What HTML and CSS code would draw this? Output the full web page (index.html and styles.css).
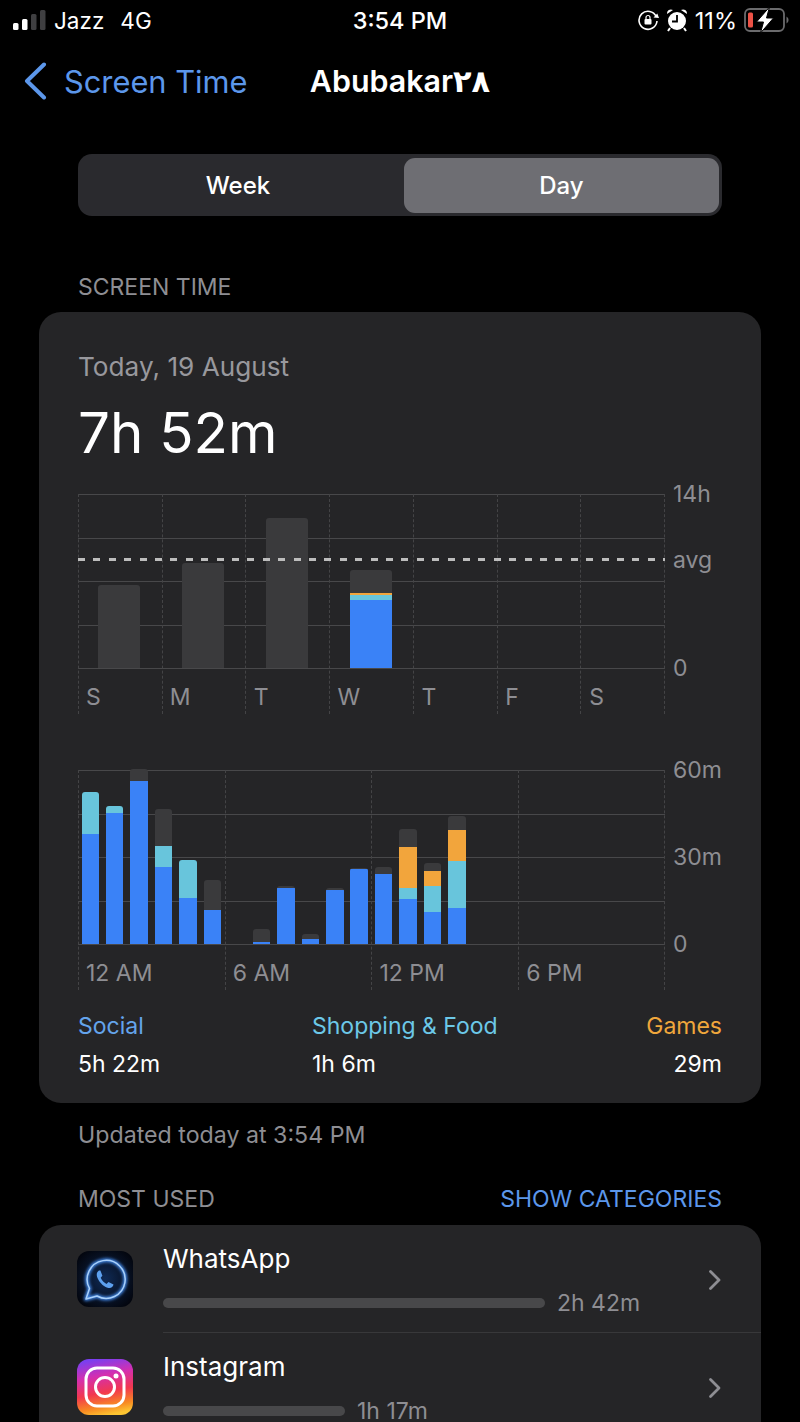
FILE: index.html
```html
<!doctype html>
<html>

<head>
  <title>Screen Time</title>
  <link rel="stylesheet" href="styles.css">
</head>

<body>
  <div class="status-bar">
    <div class="status-left">
      <svg class="signal" width="33" height="20" viewBox="0 0 33 20">
        <rect x="0" y="13" width="5.500" height="7" rx="1.500" fill="#fff"/>
        <rect x="9" y="9" width="5.500" height="11" rx="1.500" fill="#fff"/>
        <rect x="18" y="4" width="5.500" height="16" rx="1.500" fill="#3f3f41"/>
        <rect x="27" y="0" width="5.500" height="20" rx="1.500" fill="#3f3f41"/>
      </svg>
      <span>Jazz</span>
      <span class="network">4G</span>
    </div>
    <div class="status-time">3:54 PM</div>
    <div class="status-right">
      <svg width="21" height="22" viewBox="0 0 21 22">
        <path d="M18.200 7.500A9 9 0 1 0 19 12" fill="none" stroke="#fff" stroke-width="1.600"/>
        <path d="M21 9l-5.500-.5 3.800-4z" fill="#fff"/>
        <rect x="6.500" y="10" width="7" height="5.500" rx="1" fill="#fff"/>
        <path d="M8 10.500V8.500a2 2 0 0 1 4 0v2" fill="none" stroke="#fff" stroke-width="1.200"/>
      </svg>
      <svg class="alarm" width="22" height="24" viewBox="0 0 22 24">
        <circle cx="11" cy="13" r="9" fill="#fff"/>
        <path d="M1 6a4 4 0 0 1 6-4zM21 6a4 4 0 0 0-6-4z" fill="#fff"/>
        <path d="M11 7v6.500H6" fill="none" stroke="#000" stroke-width="1.800"/>
        <path d="M4 20l-2 3M18 20l2 3" stroke="#fff" stroke-width="2"/>
      </svg>
      <span class="battery-text">11%</span>
      <svg class="battery" width="46" height="26" viewBox="0 0 46 26">
        <rect x="1" y="2" width="39" height="22" rx="5" fill="none" stroke="#6b6b6d" stroke-width="1.800"/>
        <rect x="4" y="5.500" width="5" height="15" rx="1.500" fill="#ec5246"/>
        <path d="M42.500 9.500a4 4 0 0 1 0 7z" fill="#6b6b6d"/>
        <path d="M25.500 0L12.500 15h7l-3 11 13-15h-7z" fill="#fff" stroke="#000" stroke-width="1"/>
      </svg>
    </div>
  </div>

  <div class="nav-bar">
    <div class="nav-back">
      <svg width="24" height="38" viewBox="0 0 24 38">
        <path d="M21 2.500L4 19l17 16.500" fill="none" stroke="#5c97eb" stroke-width="4" stroke-linecap="round" stroke-linejoin="round"/>
      </svg>
      <span>Screen Time</span>
    </div>
    <div class="nav-title">Abubakar۲۸</div>
    <div></div>
  </div>

  <div class="segment">
    <div class="segment-item segment-week">Week</div>
    <div class="segment-item segment-active">Day</div>
  </div>

  <div class="section-label">SCREEN TIME</div>

  <div class="card">
    <div class="date">Today, 19 August</div>
    <div class="total">7h 52m</div>

    <!-- week chart -->
    <div class="chart chart-week">
      <div class="grid-h"><i></i><i></i><i></i><i></i><i></i></div>
      <div class="grid-v"><i></i><i></i><i></i><i></i><i></i><i></i><i></i><i></i></div>
      <div class="avg-line"></div>
      <div class="axis-label axis-top">14h</div>
      <div class="axis-label axis-avg">avg</div>
      <div class="axis-label axis-zero">0</div>
      <div class="plot week-bars">
        <div class="bar"><b class="other" style="height: 83px"></b></div>
        <div class="bar"><b class="other" style="height: 105px"></b></div>
        <div class="bar"><b class="other" style="height: 150px"></b></div>
        <div class="bar">
          <b class="other" style="height: 23px"></b>
          <b class="games" style="height: 2px"></b>
          <b class="shop" style="height: 5px"></b>
          <b class="social" style="height: 68px"></b>
        </div>
        <div class="bar"></div>
        <div class="bar"></div>
        <div class="bar"></div>
      </div>
      <div class="x-labels week-labels">
        <span>S</span><span>M</span><span>T</span><span>W</span><span>T</span><span>F</span><span>S</span>
      </div>
    </div>

    <!-- day chart -->
    <div class="chart chart-day">
      <div class="grid-h"><i></i><i></i><i></i><i></i><i></i></div>
      <div class="grid-v"><i></i><i></i><i></i><i></i><i></i></div>
      <div class="axis-label axis-top">60m</div>
      <div class="axis-label axis-mid">30m</div>
      <div class="axis-label axis-zero">0</div>
      <div class="plot day-bars">
        <div class="bar"><b class="shop" style="height: 42px"></b><b class="social" style="height: 110px"></b></div>
        <div class="bar"><b class="shop" style="height: 7px"></b><b class="social" style="height: 131px"></b></div>
        <div class="bar"><b class="other" style="height: 12px"></b><b class="social" style="height: 163px"></b></div>
        <div class="bar"><b class="other" style="height: 37px"></b><b class="shop" style="height: 21px"></b><b class="social" style="height: 77px"></b></div>
        <div class="bar"><b class="shop" style="height: 38px"></b><b class="social" style="height: 46px"></b></div>
        <div class="bar"><b class="other" style="height: 30px"></b><b class="social" style="height: 34px"></b></div>
        <div class="bar"></div>
        <div class="bar"><b class="other" style="height: 13px"></b><b class="social" style="height: 2px"></b></div>
        <div class="bar"><b class="other" style="height: 2px"></b><b class="social" style="height: 56px"></b></div>
        <div class="bar"><b class="other" style="height: 5px"></b><b class="social" style="height: 5px"></b></div>
        <div class="bar"><b class="other" style="height: 2px"></b><b class="social" style="height: 54px"></b></div>
        <div class="bar"><b class="other" style="height: 1px"></b><b class="social" style="height: 75px"></b></div>
        <div class="bar"><b class="other" style="height: 7px"></b><b class="social" style="height: 70px"></b></div>
        <div class="bar"><b class="other" style="height: 18px"></b><b class="games" style="height: 41px"></b><b class="shop" style="height: 11px"></b><b class="social" style="height: 45px"></b></div>
        <div class="bar"><b class="other" style="height: 8px"></b><b class="games" style="height: 15px"></b><b class="shop" style="height: 26px"></b><b class="social" style="height: 32px"></b></div>
        <div class="bar"><b class="other" style="height: 14px"></b><b class="games" style="height: 31px"></b><b class="shop" style="height: 47px"></b><b class="social" style="height: 36px"></b></div>
      </div>
      <div class="x-labels day-labels">
        <span>12 AM</span><span>6 AM</span><span>12 PM</span><span>6 PM</span>
      </div>
    </div>

    <div class="legend">
      <div class="legend-item">
        <div class="legend-name text-social">Social</div>
        <div class="legend-value">5h 22m</div>
      </div>
      <div class="legend-item">
        <div class="legend-name text-shop">Shopping &amp; Food</div>
        <div class="legend-value">1h 6m</div>
      </div>
      <div class="legend-item legend-last">
        <div class="legend-name text-games">Games</div>
        <div class="legend-value">29m</div>
      </div>
    </div>
  </div>

  <div class="updated">Updated today at 3:54 PM</div>

  <div class="list-header">
    <span>MOST USED</span>
    <span class="show-categories">SHOW CATEGORIES</span>
  </div>

  <div class="list-card">
    <div class="app-row">
      <svg class="app-icon" width="56" height="56" viewBox="0 0 56 56">
        <defs>
          <radialGradient id="wa-bg" cx="50%" cy="50%" r="60%">
            <stop offset="0" stop-color="#0f2a55"/>
            <stop offset="0.7" stop-color="#071022"/>
            <stop offset="1" stop-color="#03060f"/>
          </radialGradient>
          <filter id="wa-glow" x="-30%" y="-30%" width="160%" height="160%">
            <feGaussianBlur stdDeviation="1.500"/>
          </filter>
        </defs>
        <rect width="56" height="56" rx="12" fill="url(#wa-bg)"/>
        <path d="M9 48l3.500-10.500A19 19 0 1 1 20 45z" fill="none" stroke="#3f86e6" stroke-width="4" stroke-linejoin="round" filter="url(#wa-glow)"/>
        <path d="M9 48l3.500-10.500A19 19 0 1 1 20 45z" fill="none" stroke="#a9d0fa" stroke-width="1.500" stroke-linejoin="round"/>
        <path d="M22 19.500c-2.500 1.500-3 4.500-1 8.500s6 8 10.500 9c2.500.5 4.500-1 5-3.500l-5-2.500-2 2c-2.500-1.200-4.500-3.400-5.800-6.200l1.700-2-2-5.300z" fill="#5da0ee"/>
      </svg>
      <div class="app-body">
        <div class="app-info">
          <div class="app-name">WhatsApp</div>
          <div class="app-meta">
            <div class="usage-bar" style="width: 382px"></div>
            <span>2h 42m</span>
          </div>
        </div>
        <svg class="chevron" width="14" height="22" viewBox="0 0 14 22">
          <path d="M2.500 2.500L11 11l-8.500 8.500" fill="none" stroke="#8e8e93" stroke-width="2.800" stroke-linecap="round" stroke-linejoin="round"/>
        </svg>
      </div>
    </div>
    <div class="app-row">
      <svg class="app-icon" width="56" height="56" viewBox="0 0 56 56">
        <defs>
          <linearGradient id="ig-bg" x1="0.35" y1="0" x2="0.55" y2="1">
            <stop offset="0" stop-color="#7a3ff0"/>
            <stop offset="0.3" stop-color="#d42fb0"/>
            <stop offset="0.6" stop-color="#f2384f"/>
            <stop offset="0.85" stop-color="#f88a22"/>
            <stop offset="1" stop-color="#fdc532"/>
          </linearGradient>
        </defs>
        <rect width="56" height="56" rx="12" fill="url(#ig-bg)"/>
        <rect x="9" y="9" width="38" height="38" rx="11" fill="none" stroke="#fff" stroke-width="3"/>
        <circle cx="28" cy="28" r="9.500" fill="none" stroke="#fff" stroke-width="3"/>
        <circle cx="39" cy="17" r="2.500" fill="#fff"/>
      </svg>
      <div class="app-body">
        <div class="app-info">
          <div class="app-name">Instagram</div>
          <div class="app-meta">
            <div class="usage-bar" style="width: 182px"></div>
            <span>1h 17m</span>
          </div>
        </div>
        <svg class="chevron" width="14" height="22" viewBox="0 0 14 22">
          <path d="M2.500 2.500L11 11l-8.500 8.500" fill="none" stroke="#8e8e93" stroke-width="2.800" stroke-linecap="round" stroke-linejoin="round"/>
        </svg>
      </div>
    </div>
  </div>
</body>

</html>
```

FILE: styles.css
```css
html {
  background: #000;
}

body {
  margin: 0;
  height: 1422px;
  overflow: hidden;
  background: #000;
  color: #fff;
  font-family: 'Inter', 'DejaVu Sans', sans-serif;
}

/* status bar */
.status-bar {
  display: grid;
  grid-template-columns: 1fr auto 1fr;
  align-items: center;
  height: 40px;
  font-size: 22.500px;
}

.status-left {
  display: flex;
  align-items: center;
  gap: 8px;
  padding-left: 13px;
}

.network {
  margin-left: 8px;
}

.status-time {
  font-size: 23.500px;
  font-weight: 500;
}

.status-right {
  display: flex;
  align-items: center;
  justify-content: flex-end;
  gap: 7px;
  padding-right: 10px;
  font-size: 23.500px;
}

/* nav */
.nav-bar {
  display: grid;
  grid-template-columns: 1fr auto 1fr;
  align-items: center;
  height: 82px;
}

.nav-back {
  display: flex;
  align-items: center;
  gap: 17px;
  padding-left: 23px;
  font-size: 30.800px;
  color: #5c97eb;
}

.nav-title {
  font-size: 30.400px;
  font-weight: 600;
}

/* week / day switch */
.segment {
  display: flex;
  height: 62px;
  margin: 32px 78px 0;
  padding: 4px 3px 3px 4px;
  box-sizing: border-box;
  background: #2a2a2e;
  border-radius: 14px;
  font-size: 24px;
  font-weight: 500;
}

.segment-item {
  display: flex;
  align-items: center;
  justify-content: center;
  border-radius: 11px;
}

.segment-week {
  flex: 1;
  padding-right: 10px;
}

.segment-active {
  width: 315px;
  background: #6e6e73;
}

.section-label {
  margin: 58px 78px 0;
  font-size: 23px;
  line-height: 26px;
  color: #8e8e93;
}

/* main card */
.card {
  margin: 12px 39px 0;
  padding: 40px 39px 26px;
  background: #252527;
  border-radius: 22px;
}

.date {
  font-size: 26.200px;
  line-height: 30px;
  color: #98989d;
}

.total {
  margin-top: 19px;
  font-size: 56.500px;
  line-height: 64px;
  font-weight: 400;
}

.chart {
  position: relative;
  width: 587px;
}

.chart-week {
  margin-top: 29px;
}

.chart-day {
  margin-top: 56px;
}

.grid-h {
  position: absolute;
  top: 0;
  left: 0;
  right: 0;
  height: 175px;
  display: flex;
  flex-direction: column;
  justify-content: space-between;
}

.grid-h i {
  display: block;
  height: 1px;
  background: #48484a;
}

.grid-v {
  position: absolute;
  top: 0;
  left: 0;
  right: 0;
  bottom: 0;
  display: flex;
  justify-content: space-between;
}

.grid-v i {
  display: block;
  width: 0;
  border-left: 1px dashed #444446;
}

.avg-line {
  position: absolute;
  top: 64px;
  left: 0;
  right: 0;
  height: 3px;
  background: repeating-linear-gradient(90deg, #bdbdbd 0, #bdbdbd 7px, transparent 7px, transparent 15.400px);
  z-index: 2;
}

.axis-label {
  position: absolute;
  left: 595px;
  font-size: 23px;
  line-height: 26px;
  color: #8e8e93;
}

.axis-top {
  top: -13px;
}

.axis-avg {
  top: 53px;
}

.axis-mid {
  top: 74px;
}

.axis-zero {
  top: 161px;
}

.plot {
  position: relative;
  display: flex;
  align-items: flex-end;
  height: 174px;
}

.bar {
  display: flex;
  flex-direction: column;
  border-radius: 3px 3px 0 0;
  overflow: hidden;
}

.bar b {
  display: block;
}

.week-bars .bar {
  width: 42px;
  margin: 0 21.900px 0 20px;
}

.day-bars .bar {
  width: 17.500px;
  margin: 0 3.460px 0 3.500px;
}

.other {
  background: #3a3a3c;
}

.games {
  background: #f2a53c;
}

.shop {
  background: #68c5dc;
}

.social {
  background: #3a82f7;
}

.x-labels {
  display: flex;
  height: 46px;
  padding-top: 12px;
  box-sizing: border-box;
  align-items: center;
  font-size: 23px;
  color: #8e8e93;
}

.week-labels span {
  width: 83.860px;
  padding-left: 8px;
  box-sizing: border-box;
}

.day-labels span {
  width: 146.750px;
  padding-left: 8px;
  box-sizing: border-box;
}

.legend {
  display: flex;
  margin-top: 23px;
  font-size: 23px;
}

.legend-item {
  width: 234px;
}

.legend-last {
  flex: 1;
  text-align: right;
}

.legend-name {
  line-height: 26px;
}

.legend-value {
  margin-top: 12px;
  line-height: 26px;
}

.text-social {
  color: #64a4ec;
}

.text-shop {
  color: #6cc8e8;
}

.text-games {
  color: #f0a73c;
}

.updated {
  margin: 19px 78px 0;
  font-size: 23.200px;
  line-height: 26px;
  color: #8e8e93;
}

.list-header {
  display: flex;
  justify-content: space-between;
  margin: 38px 78px 0;
  font-size: 23px;
  line-height: 26px;
  color: #8e8e93;
}

.show-categories {
  color: #5c97eb;
}

/* most used list */
.list-card {
  margin: 13px 39px 0;
  background: #252527;
  border-radius: 22px 22px 0 0;
}

.app-row {
  display: flex;
  align-items: center;
  padding-left: 38px;
}

.app-icon {
  flex: none;
  margin-right: 30px;
}

.app-body {
  flex: 1;
  display: flex;
  align-items: center;
  justify-content: space-between;
  height: 107px;
  padding-right: 39px;
  border-bottom: 1px solid #38383a;
}

.app-row:last-child .app-body {
  border-bottom: none;
}

.chevron {
  margin-top: 3px;
}

.app-name {
  font-size: 26px;
  line-height: 32px;
}

.app-meta {
  display: flex;
  align-items: center;
  gap: 12px;
  margin-top: 17px;
  font-size: 23px;
  line-height: 22px;
  color: #8e8e93;
}

.usage-bar {
  height: 10px;
  border-radius: 5px;
  background: #48484a;
}
```
